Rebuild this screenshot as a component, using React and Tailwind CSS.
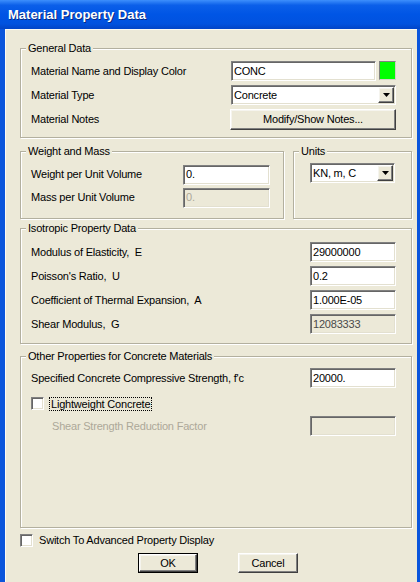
import React from "react";

const sunken =
  "border border-t-[#808080] border-l-[#808080] border-b-white border-r-white shadow-[inset_1px_1px_0_#666666,inset_-1px_-1px_0_#e3e0d0]";
const raised =
  "border border-t-white border-l-white border-b-[#404040] border-r-[#404040] shadow-[inset_-1px_-1px_0_#808080,inset_1px_1px_0_#f5f4ee] bg-[#ece9d8]";

function Field({ value, className = "", tone = "bg-white text-black" }) {
  return (
    <div className={`${sunken} h-[20px] flex items-center pl-[2px] ${tone} ${className}`}>
      {value}
    </div>
  );
}

function Arrow() {
  return (
    <svg width="7" height="4" viewBox="0 0 7 4">
      <path d="M0 0h7L3.5 4z" fill="#000" />
    </svg>
  );
}

function Select({ value, className = "" }) {
  return (
    <div className={`${sunken} bg-white h-[20px] flex items-center pl-[2px] pr-[1px] ${className}`}>
      <span className="flex-1">{value}</span>
      <div className={`${raised} w-[16px] h-[16px] flex items-center justify-center`}>
        <Arrow />
      </div>
    </div>
  );
}

function Button({ label, isDefault, className = "w-[60px] h-[20px]" }) {
  return (
    <div className={`${className} ${isDefault ? "border border-black" : ""}`}>
      <div className={`${raised} w-full h-full flex items-center justify-center whitespace-nowrap`}>
        {label}
      </div>
    </div>
  );
}

function Checkbox() {
  return <div className={`${sunken} bg-white w-[13px] h-[13px] shrink-0`} />;
}

function Group({ title, className = "", children }) {
  return (
    <fieldset
      className={`border border-[#b3b09f] shadow-[inset_1px_1px_0_#fff,1px_1px_0_#fff] ${className}`}
    >
      <legend className="ml-[5px] px-[2px] bg-[#ece9d8] leading-[13px]">{title}</legend>
      {children}
    </fieldset>
  );
}

function Row({ label, children, h = "h-[24px]" }) {
  return (
    <div className={`flex items-center justify-between pl-[10px] pr-[15px] ${h}`}>
      <span className="whitespace-pre">{label}</span>
      {children}
    </div>
  );
}

export default function App() {
  return (
    <div className="w-[420px] h-[582px] flex flex-col overflow-hidden font-['Liberation_Sans',Arial,sans-serif] text-[11px] tracking-[-0.2px] text-black">
      <div className="h-[29px] shrink-0 flex items-center pl-[8px] bg-[linear-gradient(to_bottom,#3d8ffc_0%,#0b5fe9_18%,#0055e5_50%,#0152df_82%,#0244c6_100%)]">
        <span className="text-white font-bold text-[13px] tracking-normal [text-shadow:1px_1px_0_#0a2a80]">
          Material Property Data
        </span>
      </div>
      <div className="flex flex-1">
        <div className="w-[5px] bg-[#0a55dc]" />
        <div className="flex-1 bg-[#ece9d8] border-l border-t border-[#fbfaf5] pl-[14px] pr-[5px] pt-[12px]">
          <Group title="General Data" className="h-[96px]">
            <div className="pt-[4px]">
              <Row label="Material Name and Display Color">
                <div className="flex gap-[3px]">
                  <Field value="CONC" className="w-[145px]" />
                  <div className="w-[17px] h-[19px] bg-[#00ff00] border border-t-[#808080] border-l-[#808080] border-b-[#d4d0c8] border-r-[#d4d0c8]" />
                </div>
              </Row>
              <Row label="Material Type">
                <Select value="Concrete" className="w-[165px]" />
              </Row>
              <Row label="Material Notes">
                <Button label="Modify/Show Notes..." className="w-[166px] h-[21px]" />
              </Row>
            </div>
          </Group>

          <div className="flex gap-[9px] mt-[7px]">
            <Group title="Weight and Mass" className="h-[74px] w-[264px]">
              <div className="pt-[5px]">
                <div className="flex items-center justify-between pl-[10px] pr-[13px] h-[23px]">
                  <span>Weight per Unit Volume</span>
                  <Field value="0." className="w-[87px]" />
                </div>
                <div className="flex items-center justify-between pl-[10px] pr-[13px] h-[23px]">
                  <span>Mass per Unit Volume</span>
                  <Field value="0." tone="bg-[#ece9d8] text-[#aca899]" className="w-[87px] h-[19px]" />
                </div>
              </div>
            </Group>
            <Group title="Units" className="h-[74px] flex-1">
              <div className="pt-[5px] pl-[16px]">
                <Select value="KN, m, C" className="w-[85px]" />
              </div>
            </Group>
          </div>

          <Group title="Isotropic Property Data" className="h-[122px] mt-[3px]">
            <div className="pt-[5px]">
              <Row label="Modulus of Elasticity,  E">
                <Field value="29000000" className="w-[86px]" />
              </Row>
              <Row label="Poisson's Ratio,  U">
                <Field value="0.2" className="w-[86px]" />
              </Row>
              <Row label="Coefficient of Thermal Expansion,  A">
                <Field value="1.000E-05" className="w-[86px]" />
              </Row>
              <Row label="Shear Modulus,  G">
                <Field value="12083333" tone="bg-[#ece9d8] text-[#4a4a4a]" className="w-[86px]" />
              </Row>
            </div>
          </Group>

          <Group title="Other Properties for Concrete Materials" className="h-[178px] mt-[6px]">
            <div className="pt-[3px]">
              <Row label="Specified Concrete Compressive Strength, f'c">
                <Field value="20000." className="w-[86px] h-[19px]" />
              </Row>
              <div className="flex items-center gap-[5px] pl-[10px] h-[27px]">
                <Checkbox />
                <span className="border border-dotted border-black px-[1px] leading-[12px]">
                  Lightweight Concrete
                </span>
              </div>
              <div className="flex items-center justify-between pl-[31px] pr-[15px] h-[18px]">
                <span className="text-[#aca899]">Shear Strength Reduction Factor</span>
                <Field value="" tone="bg-[#ece9d8]" className="w-[86px] h-[18px]" />
              </div>
            </div>
          </Group>

          <div className="flex items-center gap-[6px] h-[13px] mt-[6px]">
            <Checkbox />
            <span>Switch To Advanced Property Display</span>
          </div>

          <div className="flex gap-[40px] pl-[118px] mt-[6px]">
            <Button label="OK" isDefault />
            <Button label="Cancel" />
          </div>
        </div>
        <div className="w-[3px] bg-[#0a55dc]" />
      </div>
    </div>
  );
}
